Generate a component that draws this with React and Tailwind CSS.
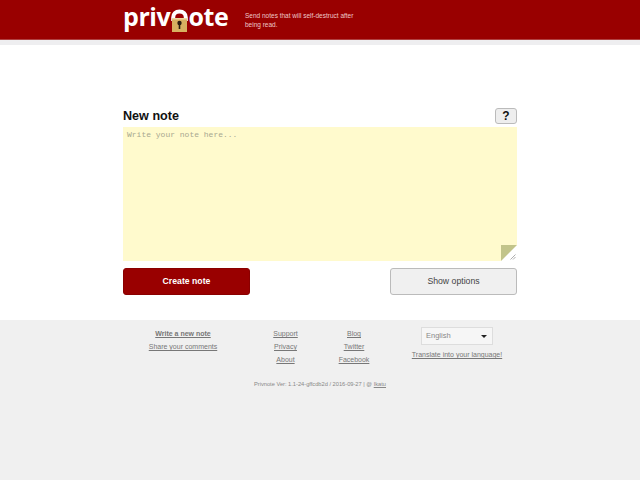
import React from "react";

const sans = "font-['Liberation_Sans',Arial,sans-serif]";

function LockN() {
  return (
    <svg width="17" height="23" viewBox="0 0 17 23" className="shrink-0 mx-[0.5px]">
      <path d="M2.2 12V8.5C2.2 5 4.5 2.6 8.5 2.6S14.8 5 14.8 8.5V12" fill="none" stroke="#fff" strokeWidth="4" />
      <rect x="1" y="9" width="15" height="14" fill="#d8b060" />
      <rect x="1" y="9" width="15" height="1.5" fill="#eed9a0" />
      <circle cx="8.5" cy="14" r="2.2" fill="#2a1c10" />
      <rect x="7.7" y="14" width="1.6" height="6" fill="#2a1c10" />
    </svg>
  );
}

function FootLink({ children, bold }) {
  return (
    <a className={`block underline text-[#777] text-[7px] leading-[13px] ${bold ? "font-bold" : ""}`}>{children}</a>
  );
}

export default function App() {
  return (
    <div className={`min-h-[480px] flex flex-col bg-white ${sans}`}>
      {/* HEADER */}
      <div className="h-[40px] bg-[#990000] border-b border-[#b04040]">
        <div className="w-[394px] ml-[123px] flex items-start">
          <div className="w-[122px] flex items-end h-[32px] text-white font-bold text-[25px] leading-[32px] font-['Open_Sans',sans-serif] tracking-[-0.4px]">
            <span>priv</span>
            <LockN />
            <span>ote</span>
          </div>
          <p className="w-[112px] pt-[11px] text-[6.5px] leading-[9px] text-[#eec8c8]">
            Send notes that will self-destruct after being read.
          </p>
        </div>
      </div>
      <div className="h-[5px] bg-[#eeeef0]" />

      {/* NOTE FORM */}
      <div className="w-[394px] ml-[123px] pt-[63px] pb-[25px]">
        <div className="flex justify-between items-start h-[19px]">
          <h1 className="text-[12.6px] font-bold text-[#111] leading-[16px]">New note</h1>
          <button className="w-[22px] h-[16px] bg-[#eee] border border-[#bbb] rounded-[3px] text-[12px] font-bold leading-none text-[#111]">
            ?
          </button>
        </div>
        <div className="relative h-[134px] bg-[#fffacd] px-[4px] py-[3px]">
          <p className="font-['Liberation_Mono',monospace] text-[8px] leading-[10px] text-[#a8a890]">
            Write your note here...
          </p>
          <div className="absolute right-0 bottom-0 w-[16px] h-[16px] bg-white">
            <div className="w-[16px] h-[16px] bg-[#c2c48a] [clip-path:polygon(0_0,100%_0,0_100%)]" />
            <svg width="6" height="6" viewBox="0 0 6 6" className="absolute right-[1px] bottom-[1px]">
              <path d="M0.5 5.5L5.5 0.5M3 5.5L5.5 3" stroke="#999" strokeWidth="0.8" />
            </svg>
          </div>
        </div>
        <div className="flex justify-between mt-[7px]">
          <button className="w-[127px] h-[27px] bg-[#990000] border border-[#8a0000] rounded-[3px] text-white font-bold text-[8.7px]">
            Create note
          </button>
          <button className="w-[127px] h-[27px] bg-[#f0f0f0] border border-[#bbb] rounded-[3px] text-[#444] text-[8.7px]">
            Show options
          </button>
        </div>
      </div>

      {/* FOOTER */}
      <div className="flex-1 bg-[#f0f0f0] pt-[7px]">
        <div className="flex w-[411px] ml-[123px] text-center">
          <div className="w-[120px]">
            <FootLink bold>Write a new note</FootLink>
            <FootLink>Share your comments</FootLink>
          </div>
          <div className="w-[85px]">
            <FootLink>Support</FootLink>
            <FootLink>Privacy</FootLink>
            <FootLink>About</FootLink>
          </div>
          <div className="w-[52px]">
            <FootLink>Blog</FootLink>
            <FootLink>Twitter</FootLink>
            <FootLink>Facebook</FootLink>
          </div>
          <div className="w-[154px] flex flex-col items-center">
            <div className="w-[72px] h-[18px] bg-[#f6f6f6] border border-[#ddd] flex items-center justify-between px-[4px] text-[7.5px] text-[#888]">
              <span>English</span>
              <span className="w-0 h-0 border-x-[3px] border-x-transparent border-t-[3px] border-t-[#222] mr-[1px]" />
            </div>
            <a className="mt-[5px] underline text-[7px] leading-[10px] text-[#777] whitespace-nowrap">Translate into your language!</a>
          </div>
        </div>
        <p className="mt-[14px] text-center text-[5.7px] leading-[8px] text-[#888]">
          Privnote Ver: 1.1-24-gffcdb2d / 2016-09-27 | @ <span className="underline">Ikatu</span>
        </p>
      </div>
    </div>
  );
}
